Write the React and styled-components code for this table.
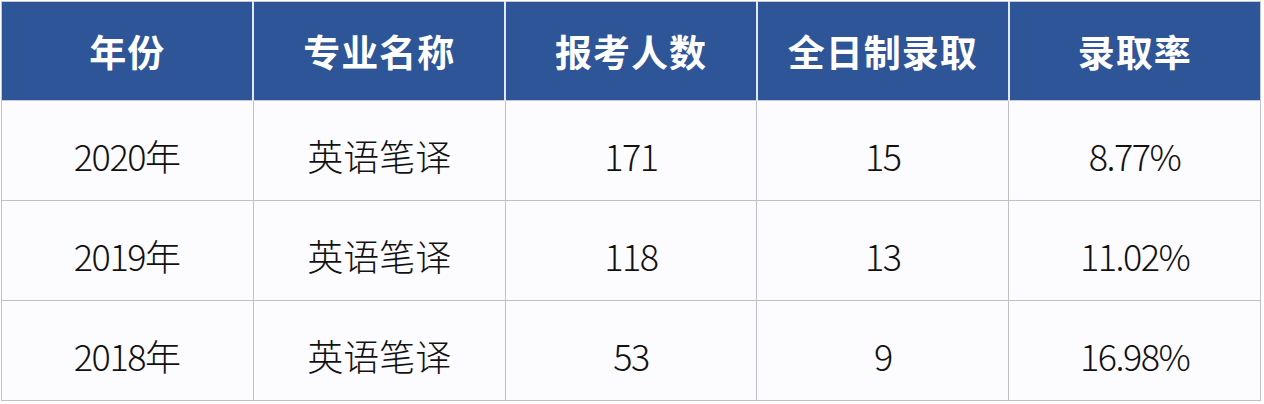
import React from "react";
import styled, { createGlobalStyle } from "styled-components";

const Global = createGlobalStyle`
  html, body { margin: 0; padding: 0; background: #ffffff; }
  body { font-family: "Noto Sans CJK SC", "Noto Sans", sans-serif; }
`;

const Frame = styled.div`
  width: 1264px;
  height: 404px;
  padding: 1px 2px 2px 1px;
  box-sizing: border-box;
  background: #ffffff;
`;

const Table = styled.table`
  width: 1260px;
  border-collapse: collapse;
  table-layout: fixed;
  background: #fcfbfe;
`;

const HeadCell = styled.th`
  height: 98px;
  padding: 0;
  background: #2e5597;
  color: #ffffff;
  font-family: "Noto Sans CJK SC", sans-serif;
  font-weight: 700;
  font-size: 37px;
  letter-spacing: 1px;
  text-align: center;
  vertical-align: middle;
  border: 1px solid #c6c9d2;
  border-right: 2px solid #e4e7ee;
  &:last-child { border-right: 1px solid #c6c9d2; }
`;

const Cell = styled.td`
  height: 100px;
  color: #111111;
  font-family: "Noto Sans CJK SC", sans-serif;
  font-weight: 300;
  font-size: 36px;
  text-align: center;
  vertical-align: middle;
  border: 1px solid #bfbfc7;
  padding: 8px 0 0 0;
  box-sizing: border-box;
`;

const Num = styled.span`
  letter-spacing: -1.5px;
`;

const headers = ["年份", "专业名称", "报考人数", "全日制录取", "录取率"];
const rows = [
  ["2020", "英语笔译", "171", "15", "8.77%"],
  ["2019", "英语笔译", "118", "13", "11.02%"],
  ["2018", "英语笔译", "53", "9", "16.98%"],
];

export default function App() {
  return (
    <>
      <Global />
      <Frame>
        <Table>
          <thead>
            <tr>
              {headers.map((h) => (
                <HeadCell key={h}>{h}</HeadCell>
              ))}
            </tr>
          </thead>
          <tbody>
            {rows.map((r) => (
              <tr key={r[0]}>
                <Cell><Num>{r[0]}</Num>年</Cell>
                <Cell>{r[1]}</Cell>
                <Cell><Num>{r[2]}</Num></Cell>
                <Cell><Num>{r[3]}</Num></Cell>
                <Cell><Num>{r[4]}</Num></Cell>
              </tr>
            ))}
          </tbody>
        </Table>
      </Frame>
    </>
  );
}
